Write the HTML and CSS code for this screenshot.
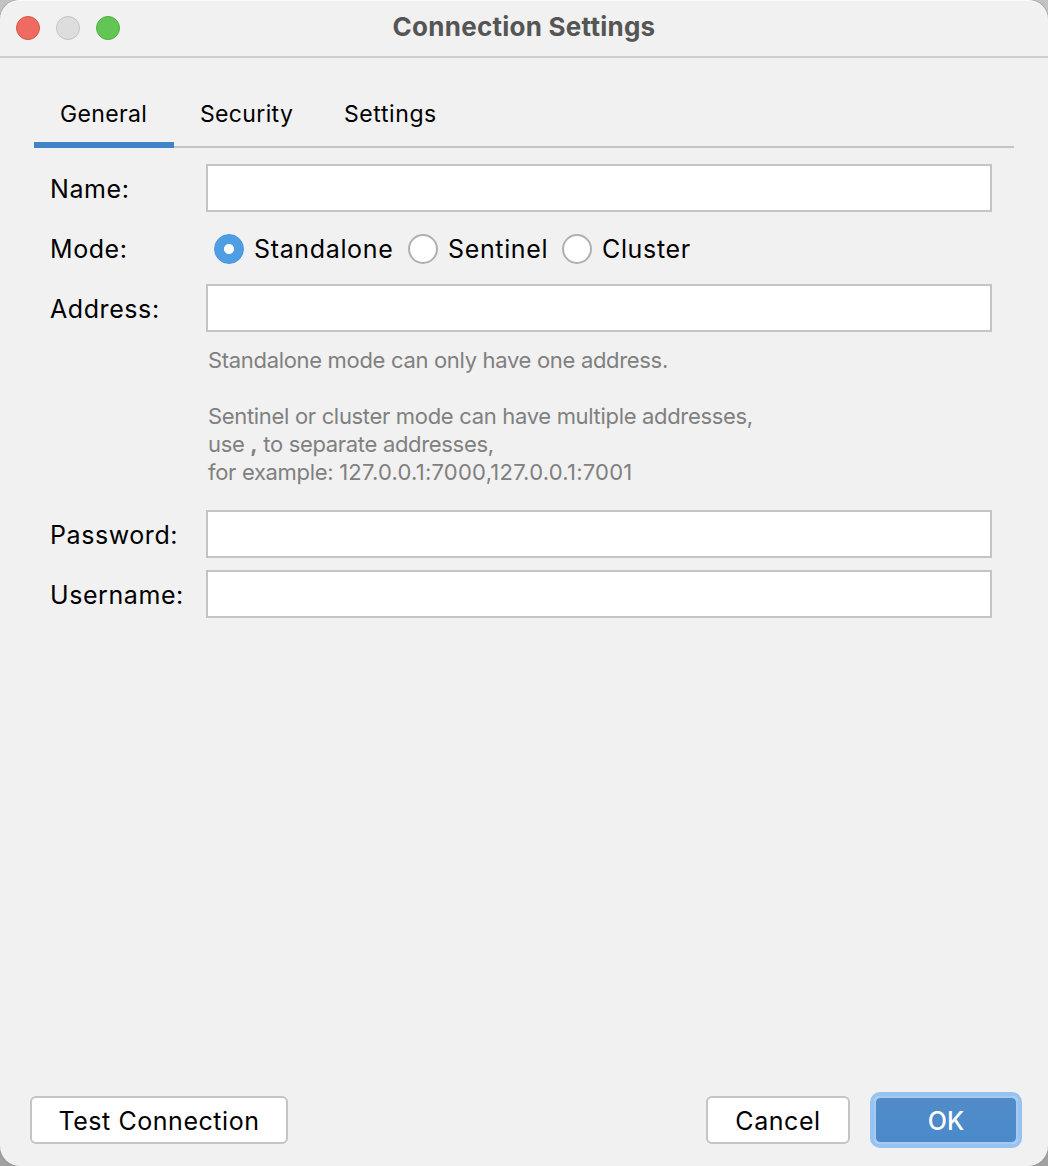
FILE: index.html
```html
<!DOCTYPE html>
<html lang="en">
<head>
<meta charset="utf-8">
<title>Connection Settings</title>
<link rel="stylesheet" href="styles.css">
</head>
<body>
<div class="window">
  <header class="titlebar">
    <div class="lights">
      <span class="light light-close"></span>
      <span class="light light-minimize"></span>
      <span class="light light-zoom"></span>
    </div>
    <h1 class="title">Connection Settings</h1>
  </header>
  <nav class="tabs">
    <a class="tab tab-general active"><span>General</span></a>
    <a class="tab tab-security"><span>Security</span></a>
    <a class="tab tab-settings"><span>Settings</span></a>
  </nav>
  <main class="form">
    <label class="label" for="name">Name:</label>
    <input class="field" id="name" type="text">
    <span class="label">Mode:</span>
    <div class="modes">
      <label class="mode mode-standalone"><span class="radio checked"></span><span>Standalone</span></label>
      <label class="mode mode-sentinel"><span class="radio"></span><span>Sentinel</span></label>
      <label class="mode"><span class="radio"></span><span>Cluster</span></label>
    </div>
    <label class="label" for="address">Address:</label>
    <input class="field" id="address" type="text">
    <div class="help">
      <p>Standalone mode can only have one address.</p>
      <p>Sentinel or cluster mode can have multiple addresses,<br>use <b>,</b> to separate addresses,<br>for example: <span class="example">127.0.0.1:7000,127.0.0.1:7001</span></p>
    </div>
    <label class="label" for="password">Password:</label>
    <input class="field" id="password" type="password">
    <label class="label" for="username">Username:</label>
    <input class="field" id="username" type="text">
  </main>
  <footer class="actions">
    <button class="button button-test">Test Connection</button>
    <button class="button button-cancel">Cancel</button>
    <button class="button button-ok">OK</button>
  </footer>
</div>
</body>
</html>
```
FILE: styles.css
```css
* {
  box-sizing: border-box;
}

body {
  margin: 0;
  background: linear-gradient(#c4c4c4, #a2a2a2);
  font-family: Inter, "Liberation Sans", sans-serif;
  font-size: 25px;
  line-height: 30px;
  letter-spacing: 0.58px;
  color: #000;
}

.window {
  display: flex;
  flex-direction: column;
  height: 1166px;
  border-radius: 20px;
  background: #f1f1f1;
  box-shadow: inset 0 1px 0 #fafafa, 0 0 2px #777;
  overflow: hidden;
}

.titlebar {
  display: grid;
  grid-template-columns: 1fr auto 1fr;
  align-items: center;
  height: 58px;
  padding: 0 16px;
  border-bottom: 2px solid #cfcfcf;
}

.lights {
  display: flex;
  gap: 16px;
}

.light {
  width: 24px;
  height: 24px;
  border: 1px solid;
  border-radius: 50%;
}

.light-close {
  background: #ed6b60;
  border-color: #d95448;
}

.light-minimize {
  background: #dddddd;
  border-color: #c2c2c2;
}

.light-zoom {
  background: #62c655;
  border-color: #50ad42;
}

.title {
  margin: 0 0 2px;
  font-size: 26px;
  line-height: 30px;
  font-weight: 700;
  letter-spacing: 0.25px;
  color: #555;
}

.tabs {
  display: flex;
  height: 66px;
  margin: 24px 34px 0;
  border-bottom: 2px solid #c4c4c4;
  font-size: 23px;
  letter-spacing: 0.35px;
}

.tab {
  height: 66px;
  padding: 17px 26px 0;
}

.tab-general {
  width: 140px;
}

.tab-security {
  width: 144px;
}

.tab-settings {
  letter-spacing: 0.6px;
}

.active {
  border-bottom: 6px solid #4083c9;
}

.form {
  display: grid;
  grid-template-columns: 156px 786px;
  row-gap: 12px;
  margin: 16px 0 0 50px;
}

.label {
  padding-top: 10px;
}

.field {
  width: 786px;
  height: 48px;
  border: 2px solid #c4c4c4;
  border-radius: 0;
  background: #fff;
  font: inherit;
  outline: none;
}

.modes {
  display: flex;
  align-items: center;
  height: 48px;
  padding: 2px 0 0 8px;
  letter-spacing: 0.65px;
}

.mode {
  display: flex;
  align-items: center;
  gap: 10px;
}

.mode-standalone {
  width: 194px;
}

.mode-sentinel {
  width: 154px;
}

.radio {
  width: 30px;
  height: 30px;
  border: 2px solid #b0b0b0;
  border-radius: 50%;
  background: #fff;
}

.checked {
  border: 1px solid #4a94db;
  background: radial-gradient(circle, #fff 4.7px, #4f9ee3 5.3px);
}

.help {
  grid-column: 2;
  height: 154px;
  padding: 2px 0 0 2px;
  font-size: 22px;
  line-height: 28px;
  letter-spacing: -0.32px;
  color: #808080;
}

.help p {
  margin: 0 0 28px;
}

.example {
  letter-spacing: 0.24px;
}

.actions {
  display: flex;
  height: 48px;
  margin: auto 30px 22px 30px;
}

.button {
  height: 48px;
  padding: 2px 0 0;
  border: 2px solid #c4c4c4;
  border-radius: 6px;
  background: #fff;
  font: inherit;
  letter-spacing: 0.55px;
  color: #000;
}

.button-test {
  width: 258px;
}

.button-cancel {
  width: 144px;
  margin: 0 24px 0 auto;
}

.button-ok {
  width: 144px;
  border-color: #a8c8ef;
  background: linear-gradient(#528cc7, #4989cc) padding-box;
  box-shadow: 0 0 0 4px #97c3f3;
  color: #fff;
  font-weight: 500;
  letter-spacing: 0;
}
```
